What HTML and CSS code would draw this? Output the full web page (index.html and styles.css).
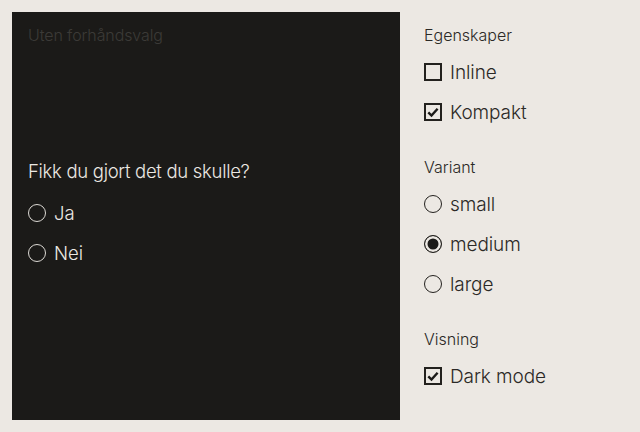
FILE: index.html
```html
<!DOCTYPE html>
<html lang="no">
<head>
<meta charset="utf-8">
<link rel="stylesheet" href="styles.css">
</head>
<body>
<div class="page">
  <section class="preview">
    <div class="preview-title">Uten forhåndsvalg</div>
    <fieldset class="question">
      <legend class="question-legend">Fikk du gjort det du skulle?</legend>
      <label class="opt"><span class="radio dark"></span><span class="opt-text">Ja</span></label>
      <label class="opt"><span class="radio dark"></span><span class="opt-text">Nei</span></label>
    </fieldset>
  </section>
  <aside class="controls">
    <div class="group">
      <div class="group-label">Egenskaper</div>
      <div class="row"><span class="check"></span><span class="row-text">Inline</span></div>
      <div class="row"><span class="check checked"><svg viewBox="0 0 18 18" width="18" height="18"><path d="M4.3 9.4 L7.5 12.6 L13.6 5.8" fill="none" stroke="#1b1a18" stroke-width="2.4"/></svg></span><span class="row-text">Kompakt</span></div>
    </div>
    <div class="group">
      <div class="group-label">Variant</div>
      <div class="row"><span class="radio light"></span><span class="row-text">small</span></div>
      <div class="row"><span class="radio light selected"></span><span class="row-text">medium</span></div>
      <div class="row"><span class="radio light"></span><span class="row-text">large</span></div>
    </div>
    <div class="group">
      <div class="group-label">Visning</div>
      <div class="row"><span class="check checked"><svg viewBox="0 0 18 18" width="18" height="18"><path d="M4.3 9.4 L7.5 12.6 L13.6 5.8" fill="none" stroke="#1b1a18" stroke-width="2.4"/></svg></span><span class="row-text">Dark mode</span></div>
    </div>
  </aside>
</div>
</body>
</html>
```
FILE: styles.css
```css
* { box-sizing: border-box; }
html, body { margin: 0; padding: 0; }
body {
  background: #ece8e3;
  font-family: Inter, "Noto Sans", sans-serif;
  font-weight: 300;
  color: #23211e;
  width: 640px;
  height: 432px;
  overflow: hidden;
}
.page {
  display: flex;
  padding: 12px;
  gap: 24px;
  height: 432px;
}
.preview {
  width: 388px;
  height: 408px;
  background: #1b1a18;
  padding: 12px 16px;
  flex-shrink: 0;
}
.preview-title {
  font-size: 16px;
  line-height: 22px;
  color: #3c3a37;
  letter-spacing: -0.1px;
}
.question {
  border: 0;
  margin: 113px 0 0 0;
  padding: 0;
}
.question-legend {
  padding: 0;
  font-size: 18.5px;
  line-height: 24px;
  color: #ebe8e3;
  letter-spacing: -0.3px;
  margin-bottom: 10px;
}
.opt {
  display: flex;
  align-items: center;
  gap: 8px;
  height: 40px;
}
.opt-text {
  font-size: 18.5px;
  color: #ebe8e3;
}
.radio {
  width: 18px;
  height: 18px;
  border-radius: 50%;
  flex-shrink: 0;
  display: inline-block;
}
.radio.dark { border: 1.5px solid #dcd9d4; }
.radio.light { border: 1.5px solid #23211e; background: #ece8e3; }
.radio.selected {
  background: #1b1a18;
  box-shadow: inset 0 0 0 2.5px #ece8e3;
}
.controls {
  display: flex;
  flex-direction: column;
  padding-top: 12px;
}
.group { display: flex; flex-direction: column; margin-bottom: 24px; }
.group-label {
  font-size: 16px;
  line-height: 22px;
  color: #2b2926;
  height: 28px;
}
.row {
  display: flex;
  align-items: center;
  gap: 8px;
  height: 40px;
}
.row-text { font-size: 19px; color: #2b2926; letter-spacing: -0.1px; }
.check {
  width: 18px;
  height: 18px;
  border: 2px solid #23211e;
  flex-shrink: 0;
  position: relative;
}
.check svg { position: absolute; left: -2px; top: -2px; }
```
